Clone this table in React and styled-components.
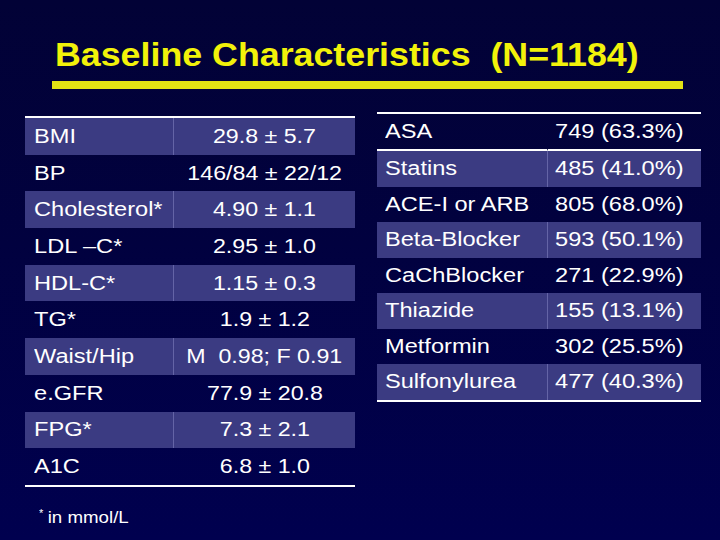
import React from "react";
import styled, { createGlobalStyle } from "styled-components";

const GlobalStyle = createGlobalStyle`
  html, body {
    margin: 0;
    padding: 0;
    background: #01013c;
  }
`;

const Slide = styled.div`
  width: 720px;
  height: 540px;
  overflow: hidden;
  box-sizing: border-box;
  padding: 37px 0 0 0;
  background: linear-gradient(to bottom, #020236 0%, #01013f 45%, #00004f 100%);
  color: #fff;
  font-family: "Liberation Sans", Arial, sans-serif;
`;

const Title = styled.h1`
  margin: 0 0 0 55px;
  font-family: "Liberation Sans Narrow", "Arial Narrow", "Liberation Sans", sans-serif;
  font-weight: bold;
  font-size: 33px;
  line-height: 36px;
  color: #f2f20a;
  white-space: pre;
  transform: scaleX(1.084);
  transform-origin: left center;
`;

const Rule = styled.div`
  margin: 8px 37px 0 52px;
  height: 8px;
  background: #e2e214;
`;

const Tables = styled.div`
  display: flex;
  align-items: flex-start;
  gap: 22px;
  margin: 23px 0 0 25px;
`;

const LeftCol = styled.div`
  display: flex;
  flex-direction: column;
  margin-top: 4px;
`;

const Table = styled.div`
  display: grid;
  grid-template-columns: ${(p) => p.$cols};
  border-top: 2px solid #fff;
  border-bottom: 2px solid #fff;
`;

const Cell = styled.div`
  height: ${(p) => p.$h};
  display: flex;
  align-items: center;
  box-sizing: border-box;
  font-size: 20px;
  white-space: nowrap;
  background: ${(p) => (p.$shade ? "#3b3b82" : "transparent")};
  justify-content: ${(p) => (p.$center ? "center" : "flex-start")};
  padding-left: ${(p) => p.$pad || "0"};
  border-left: ${(p) => (p.$divider ? `1px solid ${p.$shade ? "#6464a6" : "transparent"}` : "none")};
  border-bottom: ${(p) => (p.$underline ? "2px solid #fff" : "none")};
`;

// the slide text is Arial stretched sideways
const Wide = styled.span`
  display: inline-block;
  white-space: pre;
  transform: scaleX(${(p) => p.$k || 1.18});
  transform-origin: ${(p) => (p.$center ? "center" : "left")} center;
`;

const Footnote = styled.div`
  margin: 21px 0 0 14px;
  font-family: "Liberation Sans Narrow", "Arial Narrow", "Liberation Sans", sans-serif;
  font-size: 17px;
  color: #fff;

  sup {
    font-size: 10px;
    vertical-align: 6px;
    margin-right: 4px;
  }
`;

const baseline = [
  ["BMI", "29.8 ± 5.7"],
  ["BP", "146/84 ± 22/12"],
  ["Cholesterol*", "4.90 ± 1.1"],
  ["LDL –C*", "2.95 ± 1.0"],
  ["HDL-C*", "1.15 ± 0.3"],
  ["TG*", "1.9 ± 1.2"],
  ["Waist/Hip", "M  0.98; F 0.91"],
  ["e.GFR", "77.9 ± 20.8"],
  ["FPG*", "7.3 ± 2.1"],
  ["A1C", "6.8 ± 1.0"],
];

const meds = [
  ["ASA", "749 (63.3%)"],
  ["Statins", "485 (41.0%)"],
  ["ACE-I or ARB", "805 (68.0%)"],
  ["Beta-Blocker", "593 (50.1%)"],
  ["CaChBlocker", "271 (22.9%)"],
  ["Thiazide", "155 (13.1%)"],
  ["Metformin", "302 (25.5%)"],
  ["Sulfonylurea", "477 (40.3%)"],
];

export default function App() {
  return (
    <>
      <GlobalStyle />
      <Slide>
        <Title>{"Baseline Characteristics  (N=1184)"}</Title>
        <Rule />
        <Tables>
          <LeftCol>
            <Table $cols="148px 182px">
              {baseline.map(([label, value], i) => (
                <React.Fragment key={label}>
                  <Cell $h="36.7px" $shade={i % 2 === 0} $pad="9px">
                    <Wide>{label}</Wide>
                  </Cell>
                  <Cell $h="36.7px" $shade={i % 2 === 0} $center $divider>
                    <Wide $k={1.16} $center>
                      {value}
                    </Wide>
                  </Cell>
                </React.Fragment>
              ))}
            </Table>
            <Footnote>
              <Wide $k={1.1}>
                <sup>*</sup>in mmol/L
              </Wide>
            </Footnote>
          </LeftCol>
          <Table $cols="170px 154px">
            {meds.map(([label, value], i) => (
              <React.Fragment key={label}>
                <Cell
                  $h={i === 0 ? "37px" : "35.5px"}
                  $shade={i % 2 === 1}
                  $underline={i === 0}
                  $pad="8px"
                >
                  <Wide>{label}</Wide>
                </Cell>
                <Cell
                  $h={i === 0 ? "37px" : "35.5px"}
                  $shade={i % 2 === 1}
                  $underline={i === 0}
                  $divider
                  $pad="7px"
                >
                  <Wide>{value}</Wide>
                </Cell>
              </React.Fragment>
            ))}
          </Table>
        </Tables>
      </Slide>
    </>
  );
}
